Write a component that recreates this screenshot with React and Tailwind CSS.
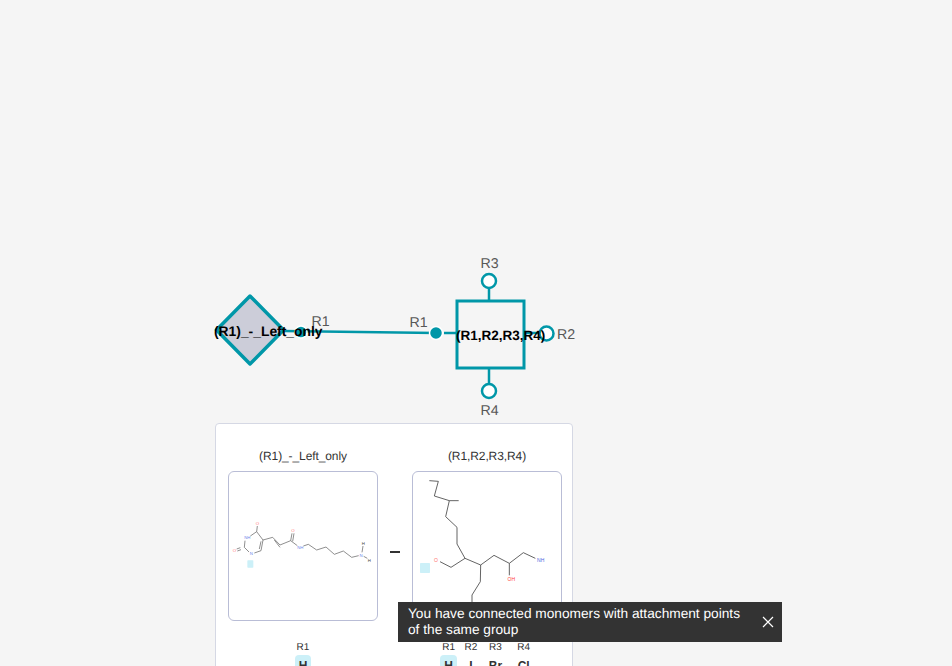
const T = "#0097a8";

function Atom({ x, y, children, c = "#ff7070", s = 13 }) {
  return (
    <text x={x} y={y} fill={c} fontSize={s} textAnchor="middle" dominantBaseline="central" fontFamily="Liberation Sans, sans-serif">
      {children}
    </text>
  );
}

function Diagram() {
  return (
    <svg className="absolute left-0 top-0" width="952" height="666" textRendering="geometricPrecision">
      <line x1="283" y1="331" x2="436" y2="333" stroke={T} strokeWidth="2.5" />
      <line x1="444" y1="333" x2="458" y2="333" stroke={T} strokeWidth="2.5" />
      <path d="M250 296 L283.5 330 L250 364 L216.5 330 Z" fill="#cccdd9" stroke={T} strokeWidth="3.5" strokeLinejoin="round" />
      <circle cx="301" cy="332" r="6" fill={T} stroke="#fff" strokeWidth="1.5" />
      <circle cx="436" cy="333" r="6.5" fill={T} stroke="#fff" strokeWidth="1.5" />
      <line x1="489" y1="287" x2="489" y2="301" stroke={T} strokeWidth="2.5" />
      <line x1="489" y1="368" x2="489" y2="385" stroke={T} strokeWidth="2.5" />
      <line x1="524" y1="333" x2="540" y2="333" stroke={T} strokeWidth="2.5" />
      <rect x="457" y="301" width="67" height="67" fill="#f5f5f5" stroke={T} strokeWidth="3" />
      <circle cx="489" cy="281" r="7" fill="#fff" stroke={T} strokeWidth="2.5" />
      <circle cx="489" cy="391" r="7" fill="#fff" stroke={T} strokeWidth="2.5" />
      <circle cx="546.500" cy="333.500" r="7" fill="#fff" stroke={T} strokeWidth="2.5" />
      <g fontFamily="Liberation Sans, sans-serif" fontSize="14.200" fill="#585858">
        <text x="311.500" y="326">R1</text>
        <text x="409.500" y="327">R1</text>
        <text x="480.500" y="268">R3</text>
        <text x="480.500" y="415">R4</text>
        <text x="557" y="339">R2</text>
      </g>
      <g fontFamily="Liberation Sans, sans-serif" fontWeight="700" fill="#000">
        <text x="214" y="336" fontSize="13.850">(R1)_-_Left_only</text>
        <text x="456" y="340" fontSize="13.500">(R1,R2,R3,R4)</text>
      </g>
    </svg>
  );
}

function MoleculeA() {
  return (
    <svg className="absolute left-[-4px] top-[38px]" width="155" height="75" viewBox="0 0 465 225">
      <rect x="67" y="151" width="18" height="22" rx="2" fill="#ccf0f8" />
      <path d="M97 48 L95 65 L76 78 M60 92 L58 112 L72 126 M46 113 L35 117 M48 119 L37 123 M88 129 L108 122 L114 90 L95 65 M103 117 L108 94 M114 90 L143 82 L165 105 L197 92 L217 107 M148 90 L165 112 M197 92 L201 70 M203 94 L207 70 M235 108 L250 103 L275 120 L303 111 L328 133 L355 123 L380 142 L401 137 M411 127 L414 108 M416 139 L427 145" fill="none" stroke="#666" strokeWidth="2.200" />
      <Atom x={97} y={41}>O</Atom>
      <Atom x={67} y={83} c="#7088ea">NH</Atom>
      <Atom x={28} y={120}>O</Atom>
      <Atom x={79} y={131} c="#7088ea">N</Atom>
      <Atom x={204} y={62}>O</Atom>
      <Atom x={226} y={112} c="#7088ea">NH</Atom>
      <Atom x={408} y={135} c="#7088ea">N</Atom>
      <Atom x={433} y={150} c="#444">H</Atom>
      <Atom x={415} y={100} c="#444">H</Atom>
    </svg>
  );
}

function MoleculeB() {
  return (
    <svg className="absolute left-[-3px] top-[-2px]" width="155" height="150" viewBox="0 0 465 450">
      <rect x="30" y="279" width="30" height="30" rx="2" fill="#ccf0f8" />
      <path d="M58 32 L85 34 L73 78 L118 92 L146 92 M118 92 L107 140 L141 172 L141 222 L165 265 L212 285 L252 256 L298 280 L340 248 L376 265 M298 280 L298 316 M165 265 L123 292 L90 275 M212 285 L211 335 L186 375 L186 440" fill="none" stroke="#444" strokeWidth="2.500" />
      <Atom x={78} y={271} s={15}>O</Atom>
      <Atom x={392} y={270} s={15} c="#4a68e0">NH</Atom>
      <Atom x={304} y={327} s={15} c="#ff4040">OH</Atom>
    </svg>
  );
}

function Column({ title, labels, chips, children }) {
  return (
    <div className="flex w-[150px] flex-col items-center">
      <div className="h-[18px] text-xs leading-[18px] tracking-[-0.1px] text-[#333] [text-rendering:geometricPrecision]">{title}</div>
      <div className="relative mt-[6px] h-[150px] w-[150px] rounded-[6px] border border-[#b9bdd6] bg-white">{children}</div>
      <div className="mt-[21px] flex gap-[7.5px]">
        {labels.map((l, i) => (
          <div key={l} className="flex flex-col items-center">
            <span className="text-[10px] leading-[12px] text-[#333] [text-rendering:geometricPrecision]">{l}</span>
            <span className={`mt-[1px] flex h-[22px] items-center justify-center rounded-[4px] px-1 text-xs font-bold text-[#333] ${chips[i] ? "bg-[#ccf0f8]" : ""}`}>
              {chips[i] || ["H", "I", "Br", "Cl"][i]}
            </span>
          </div>
        ))}
      </div>
    </div>
  );
}

export default function App() {
  return (
    <div className="relative h-[666px] w-[952px] overflow-hidden bg-[#f5f5f5] font-['Liberation_Sans',sans-serif]">
      <Diagram />
      <div className="absolute left-[215px] top-[423px] flex h-[300px] w-[358px] items-start gap-[12px] rounded-[4px] border border-[#d5d8e4] bg-white pl-[12px] pt-[23px]">
        <Column title="(R1)_-_Left_only" labels={["R1"]} chips={["H"]}>
          <MoleculeA />
        </Column>
        <div className="mt-[104px] h-[2px] w-[10px] shrink-0 bg-[#333]" />
        <Column title="(R1,R2,R3,R4)" labels={["R1", "R2", "R3", "R4"]} chips={["H", "", "", ""]}>
          <MoleculeB />
        </Column>
      </div>
      <div className="absolute left-[398px] top-[602px] flex h-[40px] w-[384px] items-center justify-between bg-[#333] pl-[10px] pr-[7px] text-white">
        <p className="w-[340px] text-[13.7px] leading-4 [text-rendering:geometricPrecision]">You have connected monomers with attachment points of the same group</p>
        <svg width="14" height="14" viewBox="0 0 14 14" className="shrink-0" fill="none" stroke="#fff" strokeWidth="1.200">
          <path d="M2 2 L12 12 M12 2 L2 12" />
        </svg>
      </div>
    </div>
  );
}
